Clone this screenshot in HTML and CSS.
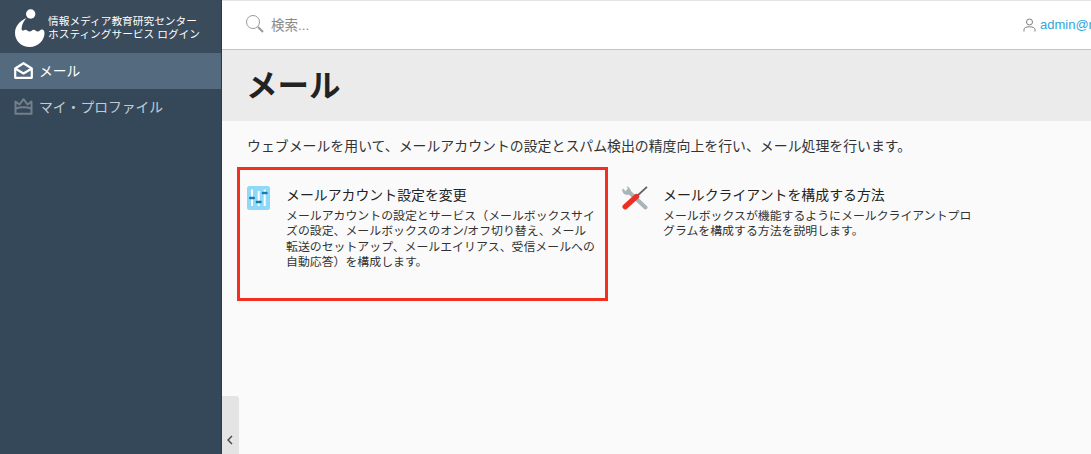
FILE: index.html
```html
<!DOCTYPE html>
<html lang="ja">
<head>
<meta charset="utf-8">
<title>メール</title>
<link rel="stylesheet" href="styles.css">
</head>
<body>
<div class="app">
  <aside class="sidebar">
    <div class="brand">
      <svg class="logo" width="30" height="38" viewBox="0 0 30 38">
        <circle cx="15.7" cy="5" r="4.7" fill="#fff"/>
        <path fill="#fff" d="M11.5 9 C4.5 12 0 17.5 0 24 C0 32 6.5 38 14.8 38 C23 38 29.5 31.5 29.5 24 C29.5 22 28.5 20.5 27 20.5 C25 20.5 24.8 22.5 22.8 22.5 C20.8 22.5 20.6 20.7 18.8 20.7 C16.8 20.7 16.6 22.5 14.6 22.5 C12.6 22.5 12.4 20.7 10.6 20.7 C8.8 20.7 8.4 22 7.2 21.5 C6 20.5 6.5 14 11.5 9 Z"/>
      </svg>
      <div class="brand-text">情報メディア教育研究センター<br>ホスティングサービス ログイン</div>
    </div>
    <a class="nav-item active">
      <svg class="nav-icon" width="19" height="17" viewBox="0 0 19 17" fill="none" stroke="#fff" stroke-width="2.2" stroke-linejoin="round">
        <path d="M1.2 6.5 L9.5 1.2 L17.8 6.5 V15.8 H1.2 Z"/>
        <path d="M2 7 L9.5 11.5 L17 7"/>
      </svg>
      <span>メール</span>
    </a>
    <a class="nav-item muted">
      <svg class="nav-icon" width="19" height="17" viewBox="0 0 19 17" fill="none" stroke="#737f8b" stroke-width="2" stroke-linejoin="round">
        <path d="M1.5 3.5 L5.5 6.5 L9.5 1.2 L13.5 6.5 L17.5 3.5 V15.8 H1.5 Z"/>
        <path d="M2 10.5 C6 8.8 13 8.8 17 10.5"/>
      </svg>
      <span>マイ・プロファイル</span>
    </a>
  </aside>
  <div class="main">
    <header class="topbar">
      <div class="search">
        <svg width="20" height="20" viewBox="0 0 20 20" fill="none" stroke="#9a9a9a" stroke-width="1">
          <circle cx="8" cy="8" r="6.5"/>
          <path d="M13 13 L18 18" stroke-width="2"/>
        </svg>
        <span>検索...</span>
      </div>
      <div class="user">
        <svg width="13" height="14" viewBox="0 0 13 14" fill="none" stroke="#7d7d7d" stroke-width="1">
          <circle cx="6.5" cy="4" r="3"/>
          <path d="M1 13.5 V11.5 C1 9.8 3 8.8 6.5 8.8 C10 8.8 12 9.8 12 11.5 V13.5"/>
        </svg>
        <span>admin@r</span>
      </div>
    </header>
    <div class="title-bar"><h1>メール</h1></div>
    <main class="content">
      <p class="intro">ウェブメールを用いて、メールアカウントの設定とスパム検出の精度向上を行い、メール処理を行います。</p>
      <div class="cards">
        <div class="card highlighted">
          <svg class="card-icon" width="23" height="24" viewBox="0 0 23 24">
            <rect x="0" y="0" width="23" height="24" rx="2.5" fill="#8ed8f8"/>
            <path d="M5 3.5 V20 M11.7 5 V20 M17.7 3.5 V20" stroke="#fff" stroke-width="2"/>
            <path d="M3.2 12 H6.8 M9.9 16 H13.5 M15.9 7 H19.5" stroke="#0f7fb5" stroke-width="2.4" stroke-linecap="round"/>
          </svg>
          <div class="card-body">
            <h2>メールアカウント設定を変更</h2>
            <p>メールアカウントの設定とサービス（メールボックスサイズの設定、メールボックスのオン/オフ切り替え、メール転送のセットアップ、メールエイリアス、受信メールへの自動応答）を構成します。</p>
          </div>
        </div>
        <div class="card second">
          <svg class="card-icon" width="26" height="24" viewBox="0 0 26 24" fill="none">
            <path d="M6 5 L23.5 21.5" stroke="#a9b4b8" stroke-width="4" stroke-linecap="round"/>
            <path d="M0.3 3.5 C0 7.5 3.5 9.8 7.5 8.5 C9.5 7 9.5 2.5 5.5 0.5 C4.8 0.3 4.5 0.6 5 1.3 L6.3 3.5 L4 5.5 L1.5 3 C0.8 2.6 0.4 2.8 0.3 3.5 Z" fill="#a9b4b8"/>
            <path d="M25 0.8 L14 11" stroke="#5d6468" stroke-width="1.8"/>
            <path d="M14.5 10.5 L3.2 20.7" stroke="#ee2e20" stroke-width="5.4" stroke-linecap="round"/>
          </svg>
          <div class="card-body">
            <h2>メールクライアントを構成する方法</h2>
            <p>メールボックスが機能するようにメールクライアントプログラムを構成する方法を説明します。</p>
          </div>
        </div>
      </div>
      <div class="collapse">
        <svg width="7" height="10" viewBox="0 0 7 10" fill="none" stroke="#444" stroke-width="1.4"><path d="M6 1 L2 5 L6 9"/></svg>
      </div>
    </main>
  </div>
</div>
</body>
</html>
```
FILE: styles.css
```css
* { box-sizing: border-box; }
html, body { margin: 0; height: 100%; overflow: hidden; }
body {
  font-family: "Liberation Sans", "Noto Sans CJK JP", sans-serif;
  background: #fafafa;
  color: #222;
}
.app { display: flex; width: 1091px; height: 454px; }
.sidebar {
  width: 222px;
  flex: none;
  background: #35485a;
  border-right: 1px solid #2a3a49;
}
.brand {
  height: 53px;
  display: flex;
  align-items: center;
  gap: 3px;
  padding: 2px 0 0 15px;
  background: #3a4b5c;
}
.logo { flex: none; }
.brand-text {
  color: #fff;
  font-size: 10.7px;
  line-height: 13px;
  white-space: nowrap;
}
.nav-item {
  height: 36px;
  display: flex;
  align-items: center;
  gap: 6px;
  padding: 0 0 2px 14px;
  font-size: 13.8px;
}
.nav-item.active { background: #546a7e; color: #fff; }
.nav-item.muted { color: #c3ccd4; }
.nav-icon { flex: none; }
.main { flex: 1; min-width: 0; display: flex; flex-direction: column; }
.topbar {
  height: 50px;
  flex: none;
  background: #fff;
  border-top: 1px solid #e4e4e8;
  border-bottom: 1px solid #c4c4c4;
  display: flex;
  align-items: center;
  justify-content: space-between;
  padding: 0 0 1px 23px;
  overflow: hidden;
}
.search { display: flex; align-items: center; gap: 6px; color: #8a8a8a; font-size: 13.5px; padding-bottom: 2px; }
.user {
  display: flex;
  align-items: center;
  gap: 4px;
  color: #2ea6dc;
  font-size: 13px;
  width: 68px;
  flex: none;
  white-space: nowrap;
}
.user svg { flex: none; }
.title-bar {
  height: 71px;
  flex: none;
  background: #ebebeb;
  padding: 0 0 5px 24px;
  display: flex;
  align-items: center;
}
h1 { margin: 0; font-size: 31.5px; font-weight: 700; color: #222; }
.content { flex: 1; position: relative; padding: 16px 0 0 25px; }
.intro { margin: 0; font-size: 13.9px; line-height: 18px; color: #333; white-space: nowrap; }
.cards { display: flex; margin: 12px 0 0 -10px; }
.card { display: flex; width: 371px; height: 134px; }
.card.highlighted { border: 3px solid #f3301f; padding: 16px 8px 0 7px; }
.card.second { width: 376px; padding: 19px 2px 0 14px; }
.card-icon { flex: none; }
.card-body { margin-left: 16px; }
.card.second .card-body { margin-left: 15px; }
h2 { margin: 0; font-size: 13.9px; line-height: 18px; font-weight: 400; color: #222; }
.card p { margin: 5px 0 0; font-size: 11.9px; line-height: 15.3px; color: #333; }
.collapse {
  position: absolute;
  left: 0;
  bottom: 0;
  width: 17px;
  height: 58px;
  background: #e4e4e4;
  border-top-right-radius: 3px;
  display: flex;
  align-items: flex-end;
  justify-content: center;
  padding: 0 3px 9px 0;
}
```
